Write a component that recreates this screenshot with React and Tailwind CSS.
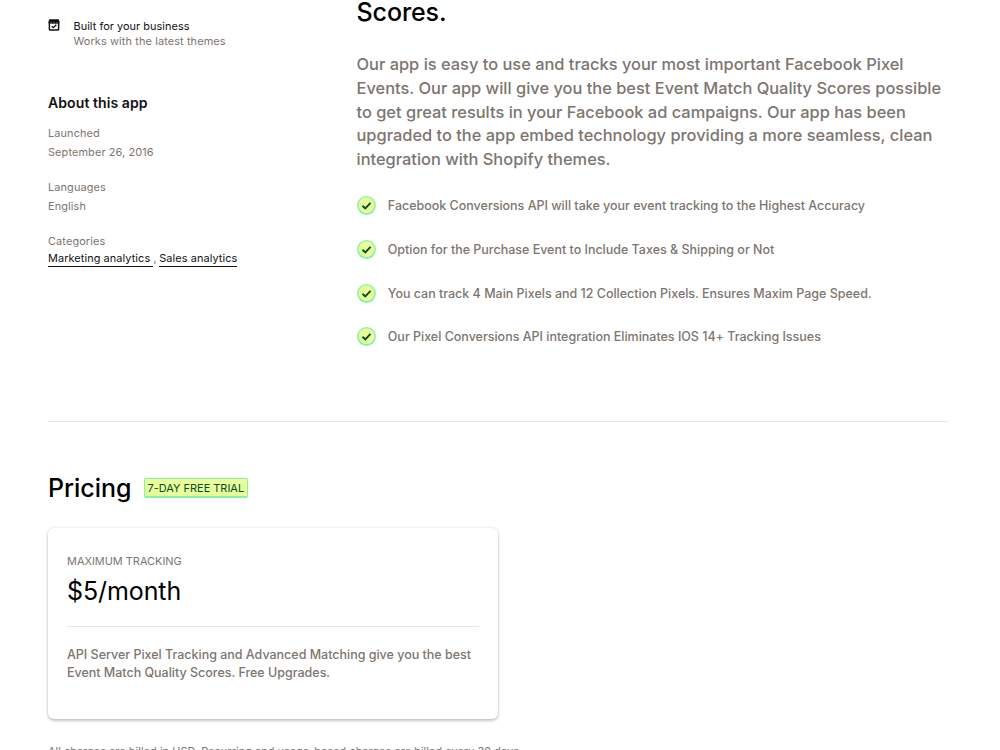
const highlights = [
  "Facebook Conversions API will take your event tracking to the Highest Accuracy",
  "Option for the Purchase Event to Include Taxes & Shipping or Not",
  "You can track 4 Main Pixels and 12 Collection Pixels. Ensures Maxim Page Speed.",
  "Our Pixel Conversions API integration Eliminates IOS 14+ Tracking Issues",
];

const description = [
  "Our app is easy to use and tracks your most important Facebook Pixel",
  "Events. Our app will give you the best Event Match Quality Scores possible",
  "to get great results in your Facebook ad campaigns. Our app has been",
  "upgraded to the app embed technology providing a more seamless, clean",
  "integration with Shopify themes.",
];

const details = [
  { label: "Launched", value: "September 26, 2016" },
  { label: "Languages", value: "English" },
];

function StoreIcon() {
  return (
    <svg viewBox="0 0 12 12" className="mt-px h-3 w-3 shrink-0" fill="none">
      <path d="M1.2 0.3h9.6l.9 2.9c0 1-.6 1.5-1.3 1.5H1.6C.8 4.7.3 4.2.3 3.2z" fill="#121212" />
      <path d="M1.4 4.2v6.2c0 .4.3.7.7.7h7.8c.4 0 .7-.3.7-.7V4.2" stroke="#121212" strokeWidth="1.5" />
      <path d="M3.7 7.2l1.6 1.5 3-3" stroke="#121212" strokeWidth="1.3" />
      <path d="M3.1 3.4v1M6 3.4v1M8.9 3.4v1" stroke="#fff" strokeWidth="0.6" />
    </svg>
  );
}

function CheckBadge() {
  return (
    <svg viewBox="0 0 19 19" className="h-[19px] w-[19px] shrink-0" fill="none">
      <circle cx="9.5" cy="9.5" r="9.4" fill="#86f2a6" />
      <circle cx="9.5" cy="9.2" r="7.9" fill="#e9ff99" />
      <path d="M5.5 9.7l2.8 2.7 5.2-5.6" stroke="#054a2c" strokeWidth="1.9" />
    </svg>
  );
}

function Sidebar() {
  return (
    <aside className="w-[308.5px] shrink-0 pt-[18px] text-[10.94px] leading-[15.6px] tracking-[0.1px] text-[#7d756f]">
      <div className="flex">
        <StoreIcon />
        <div className="ml-[13.5px]">
          <p className="pt-px leading-[14.6px] tracking-[0.03px] text-[#121212]">Built for your business</p>
          <p>Works with the latest themes</p>
        </div>
      </div>

      <h3 className="mt-[44px] text-[14.06px] font-semibold leading-5 tracking-[0.06px] text-[#121212]">
        About this app
      </h3>
      <dl className="mt-[13px]">
        {details.map((item) => (
          <div key={item.label} className="mb-[19px]">
            <dt>{item.label}</dt>
            <dd className="mt-[3.5px]">{item.value}</dd>
          </div>
        ))}
        <dt>Categories</dt>
        <dd className="mt-[2px] whitespace-pre tracking-[0.07px]">
          <a className="border-b border-[#121212] pb-px text-[#121212]">Marketing analytics </a>
          <span className="-mr-[0.5px]">{", "}</span>
          <a className="border-b border-[#121212] pb-px text-[#121212]">Sales analytics</a>
        </dd>
      </dl>
    </aside>
  );
}

function Overview() {
  return (
    <div className="flex-1 text-[#7d756f]">
      <h2 className="-mt-[3px] text-[25px] font-medium leading-[31px] tracking-[-0.1px] text-black">Scores.</h2>
      <p className="mt-[25px] whitespace-nowrap text-[16.41px] font-medium leading-[23.8px]">
        {description.map((line) => (
          <span key={line} className="block">{line}</span>
        ))}
      </p>
      <ul className="mt-6">
        {highlights.map((text) => (
          <li key={text} className="mb-[24.8px] flex items-center gap-[12.3px]">
            <CheckBadge />
            <span className="whitespace-nowrap text-[12.5px] font-medium leading-[19px] tracking-[-0.01px]">{text}</span>
          </li>
        ))}
      </ul>
    </div>
  );
}

function PricingCard() {
  return (
    <div className="mt-[23px] h-[191px] w-[450px] rounded-md px-[19px] pt-[25px] text-[#7d756f] shadow-[0_0_3px_rgba(0,0,0,0.14),0_2px_3px_rgba(0,0,0,0.2)]">
      <p className="text-[10.94px] leading-4">MAXIMUM TRACKING</p>
      <p className="mt-[7px] text-[25px] leading-[31px] tracking-[-0.1px] text-black">$5/month</p>
      <hr className="mt-[19px] border-[#e8e8e8]" />
      <p className="mt-[19px] whitespace-nowrap text-[12.5px] font-medium leading-[18px] tracking-[-0.01px]">
        API Server Pixel Tracking and Advanced Matching give you the best
        <br />
        Event Match Quality Scores. Free Upgrades.
      </p>
    </div>
  );
}

export default function App() {
  return (
    <main className="h-[750px] overflow-hidden bg-white px-12 font-['Inter',sans-serif]">
      <section className="flex h-[421px] w-[900px]">
        <Sidebar />
        <Overview />
      </section>
      <section className="w-[900px] border-t border-[#e8e8e8] pt-[50px]">
        <div className="flex items-center">
          <h2 className="text-[25px] font-medium leading-[33px] text-black">Pricing</h2>
          <span className="-mt-px ml-3 h-5 rounded-[2px] border border-b-2 border-[#86f2a6] bg-[#e9ff99] px-[3px] text-[10.94px] leading-[18px] text-[#054a2c]">
            7-DAY FREE TRIAL
          </span>
        </div>
        <PricingCard />
        <p className="mt-6 text-[10.94px] leading-4 tracking-[0.04px] text-[#7d756f]">
          All charges are billed in USD. Recurring and usage-based charges are billed every 30 days.
        </p>
      </section>
    </main>
  );
}
